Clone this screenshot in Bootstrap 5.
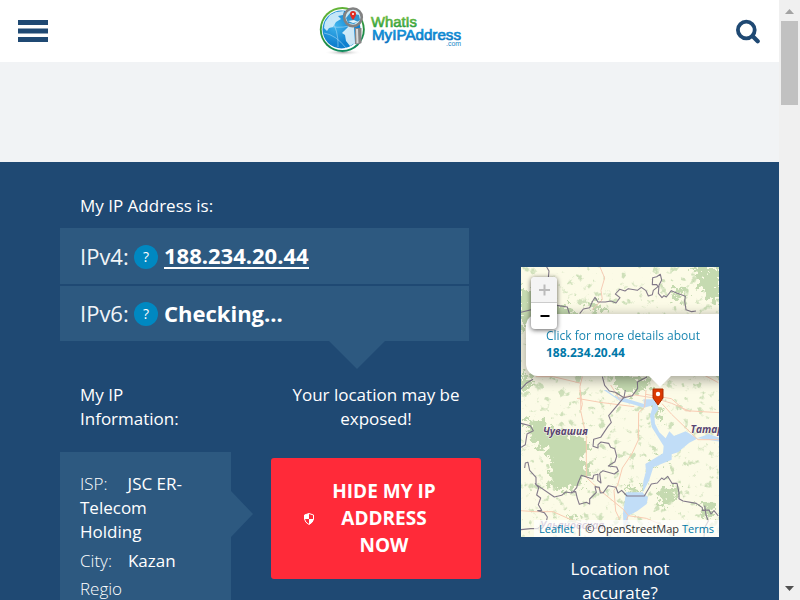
<!DOCTYPE html>
<html lang="en">
<head>
<meta charset="utf-8">
<meta name="viewport" content="width=device-width, initial-scale=1">
<title>What Is My IP Address</title>
<link href="https://cdn.jsdelivr.net/npm/bootstrap@5.3.0/dist/css/bootstrap.min.css" rel="stylesheet">
<style>
html,body{height:100%;overflow:hidden}
body{font-family:"Open Sans",sans-serif;font-size:17px;line-height:24px;color:#fff;background:#1f4973}
.page{width:779px;height:600px}
.topbar{height:62px;padding:0 18px;background:#fff}
.topbar>*{width:142px}
.brand-mark{height:62px;width:144px}
.adspace{height:100px;background:#f1f3f5}
.hero{height:438px;background:#1f4973;padding:32px 60px 0;gap:52px}
.main-col{width:409px}
.intro{padding-left:20px;margin-bottom:10px}
.ip-row{background:#2d5980;padding-left:20px;font-size:22px;line-height:30px;font-weight:300}
.ip-row.first{height:56px}
.ip-row.second{height:55px;margin-top:2px}
.ip-row strong{font-weight:700}
.ip-label{width:49px;font-size:22px;font-weight:400;white-space:nowrap;color:#f1f5f8}
.ip-row>.ip-label,.ip-row>.ip-value{margin-top:-1px}
.q{width:24px;height:24px;border-radius:50%;background:#0088c1;font-size:14px;font-weight:500;margin:1px 6px 0 5px}
.ip-link{color:#fff;text-decoration:none;border-bottom:2px solid #fff;line-height:24px}
.arrow-down{left:269px;top:100%;width:56px;height:28px;background:#2d5980;clip-path:polygon(0 0,100% 0,50% 100%)}
.arrow-right{left:100%;top:39px;width:22px;height:46px;background:#2d5980;clip-path:polygon(0 0,100% 50%,0 100%)}
.details{gap:40px;margin-top:42px}
.info-col{width:171px}
.alert-col{width:210px}
.info-box{background:#2d5980;margin-top:21px;padding:20px 20px 0;height:160px;font-weight:300}
.info-box b{font-weight:400}
.isp-row{margin-bottom:5px}
.isp-row span{margin-right:20px}
.city-row{margin-bottom:4px}
.city-row span{margin-right:16px}
.hide-btn{background:#ff2a39;color:#fff;height:121px;margin-top:27px;border-radius:3px;font-size:19px;line-height:27px;font-weight:700;border:0;padding:0 0 0 33px}
.hide-btn span{margin-left:16px;width:108px}
.map-col{width:198px;padding-top:73px}
.map{width:198px;height:270px;background:#fcfbe7}
.map-note{margin-top:20px}
.pop{left:5px;top:47px;width:230px;height:62px;background:#fff;border-radius:12px;padding:13px 20px;font-size:12px;line-height:17px;color:#0078a8;box-shadow:0 3px 14px rgba(0,0,0,.4)}
.pop-text{font-weight:400;opacity:.9}
.pop-tip{left:128px;top:109px;width:22px;height:11px;background:#fff;clip-path:polygon(0 0,100% 0,50% 100%)}
.pin{left:131px;top:121px}
.zoomer{left:10px;top:10px;width:26px;height:52px;background:#fff;border-radius:4px;box-shadow:0 1px 5px rgba(0,0,0,.65);overflow:hidden}
.zoomer svg{display:block}
.credit{right:0;bottom:0;height:17px;width:185px;background:rgba(255,255,255,.7);color:#333;font-size:11px;line-height:17px;padding:0 5px;white-space:nowrap}
.credit span{color:#0078a8}
.scroll{width:21px;height:600px;background:#f0f0f0}
</style>
<script src="https://cdn.jsdelivr.net/npm/bootstrap@5.3.0/dist/js/bootstrap.bundle.min.js"></script>
</head>
<body>
<div class="d-flex">
<div class="page flex-shrink-0 overflow-hidden">
<header class="topbar d-flex align-items-center justify-content-between">
  <div><svg class="d-block" width="30" height="22"><path d="M0 0h30v5H0zM0 8.500h30v5H0zM0 17h30v5H0z" fill="#1f4973"/></svg></div>
  <svg class="brand-mark" viewBox="318 0 144 62" role="img" aria-label="WhatIsMyIPAddress.com">
    <defs>
      <linearGradient id="ring" x1="0" y1="0" x2="0.3" y2="1"><stop stop-color="#72bd35"/><stop offset=".75" stop-color="#218d42"/><stop offset="1" stop-color="#138c5e"/></linearGradient>
      <radialGradient id="sea" cx=".35" cy=".4"><stop stop-color="#3fb4ec"/><stop offset="1" stop-color="#0f80cf"/></radialGradient>
      <linearGradient id="gt" x1="0" y1="0" x2="0" y2="1"><stop stop-color="#7ac143"/><stop offset="1" stop-color="#1d983c"/></linearGradient>
      <linearGradient id="bt" x1="0" y1="0" x2="0" y2="1"><stop stop-color="#109de0"/><stop offset="1" stop-color="#0a72c0"/></linearGradient>
      <radialGradient id="shade"><stop stop-color="#aaa"/><stop offset="1" stop-color="#fff" stop-opacity="0"/></radialGradient>
    </defs>
    <ellipse cx="343" cy="52.500" rx="19" ry="3" fill="url(#shade)"/>
    <circle cx="342.300" cy="29.500" r="22.500" fill="url(#ring)"/>
    <circle cx="342.300" cy="29.500" r="20.600" fill="#fff"/>
    <circle cx="341.500" cy="29.500" r="19" fill="url(#sea)"/>
    <path d="M325 22l5-7 6-3 8-1-1 4-5 1 3 3-5 3-3 5-4 1-2 3-3-3z" fill="#e2f5fd" opacity=".85"/>
    <path d="M344 31l5-5 5 0 1 17-5 3-4-5-1-6-3-2z" fill="#edf9fe" opacity=".85"/>
    <path d="M324 33q12 2 22 15M330 17q9 14 8 30M324 25q14 4 25 1" fill="none" stroke="#bfe5fa" stroke-width=".5"/>
    <path d="M355 28l6.500 0 0 15q-3 2-6.500 1z" fill="#858585"/><path d="M356 29h2l.5 14-2 .5z" fill="#dadada"/>
    <circle cx="353" cy="17.300" r="8.800" fill="#c9e9f6" stroke="#828282" stroke-width="2.600"/>
    <path d="M346 18l4-5 9 2 1 5-6 4-6-1z" fill="#3294ce"/><path d="M348 21l6-1 4 2-5 1z" fill="#e6f6fc"/>
    <path d="M353 20q-3-4-3-6a3 3 0 0 1 6 0q0 2-3 6z" fill="#e32b20"/><circle cx="353" cy="14" r="1" fill="#fff"/>
    <g font-family="Liberation Sans,sans-serif"><text x="371" y="27" font-size="14" textLength="46" lengthAdjust="spacingAndGlyphs" fill="url(#gt)" stroke="url(#gt)" stroke-width=".6">WhatIs</text>
    <text x="372" y="40" font-size="15" textLength="89" lengthAdjust="spacingAndGlyphs" fill="url(#bt)" stroke="url(#bt)" stroke-width=".7">MyIPAddress</text>
    <text x="446" y="46" font-size="7" textLength="15" lengthAdjust="spacingAndGlyphs" fill="#1686c8">.com</text></g>
  </svg>
  <div class="d-flex justify-content-end"><svg width="26" height="26" fill="none" stroke="#1f4973"><circle cx="11.300" cy="12" r="8.400" stroke-width="3.800"/><path d="M17.500 18L22.700 23.300" stroke-width="4.200" stroke-linecap="round"/></svg></div>
</header>
<div class="adspace"></div>
<main class="hero d-flex">
  <section class="main-col flex-shrink-0">
    <div class="intro">My IP Address is:</div>
    <div class="position-relative">
      <div class="ip-row first d-flex align-items-center"><span class="ip-label">IPv4:</span><span class="q d-flex align-items-center justify-content-center">?</span><strong class="ip-link">188.234.20.44</strong></div>
      <div class="ip-row second d-flex align-items-center"><span class="ip-label">IPv6:</span><span class="q d-flex align-items-center justify-content-center">?</span><strong class="ip-value">Checking...</strong></div>
      <div class="arrow-down position-absolute"></div>
    </div>
    <div class="details d-flex">
      <div class="info-col flex-shrink-0">
        <div class="intro mb-0">My IP<br>Information:</div>
        <div class="info-box position-relative">
          <div class="isp-row"><span>ISP:</span><b>JSC ER-</b><br><b>Telecom</b><br><b>Holding</b></div>
          <div class="city-row"><span>City:</span><b>Kazan</b></div>
          <div>Regio</div>
          <div class="arrow-right position-absolute"></div>
        </div>
      </div>
      <div class="alert-col flex-shrink-0 text-center">
        <div>Your location may be<br>exposed!</div>
        <button class="hide-btn w-100 d-flex align-items-center"><svg width="10" height="12" viewBox="0 0 10 12" class="d-block flex-shrink-0"><path d="M5 .5L9.500 2V6Q9 9.500 5 11.500Q1 9.500.5 6V2z" fill="none" stroke="#fff"/><path d="M5 .5V6H.5V2zM5 6h4.500Q9 9.500 5 11.500z" fill="#fff"/></svg><span>HIDE MY IP<br>ADDRESS<br>NOW</span></button>
      </div>
    </div>
  </section>
  <aside class="map-col flex-shrink-0 text-center">
    <div class="map position-relative overflow-hidden text-start">
      <svg class="d-block" width="198" height="270" viewBox="0 0 198 270">
        <defs>
          <filter id="specks" x="0" y="0" width="100%" height="100%" color-interpolation-filters="sRGB"><feTurbulence type="fractalNoise" baseFrequency=".13" numOctaves="4" seed="8"/><feColorMatrix values="0 0 0 0 .81  0 0 0 0 .88  0 0 0 0 .73  7 0 0 0 -4.200"/></filter>
          <filter id="rough" x="-10%" y="-10%" width="120%" height="120%"><feTurbulence type="fractalNoise" baseFrequency=".2" numOctaves="4" seed="3" result="n"/><feDisplacementMap in="SourceGraphic" in2="n" scale="24" xChannelSelector="R" yChannelSelector="G"/></filter>
        </defs>
        <rect width="198" height="270" filter="url(#specks)"/>
        <g fill="#c5dab0" filter="url(#rough)">
          <path d="M0 22l12 2 14 10 22 6 12 12 0 10-34 3-26-6zM172 0h26v38l-13-8-7-13zM152 20l11 1 2 9-11 4zM92 106l20 5 18 0-2 9-18 7-16-8zM68 36l12-2 3 10-10 4zM0 105l14 5-1 9-13 4z"/>
          <path d="M6 150l16 3 7 10 17 3 21 6 1 12-9 5 9 13-3 11-20 11-13-2-4-10 4-11-7-17-13-10-6-13zM137 223l17-3 2 11-14 8zM130 135l8 2 5 20-7-2zM177 237l16 2 0 12-12-3zM128 196l8-2 14-5-2 4-19 7zM48 248l10 1 3 6-8 1zM103 220l20 2-2 3-16 0z"/>
        </g>
        <g transform="translate(-11 123) scale(.333333)">
          <path d="M290 0L313 18 345 25 402 42 400 28 435 28 446 57 433 76 435 101 448 127 467 145 478 124 492 138 527 124 561 145 596 132 628 143V155L564 145 538 158 504 187 485 193 485 209 461 219 430 232 417 272 398 308 414 322 410 342 382 363 354 378 355 410 341 420 339 370 348 307 398 307 400 274 408 244 406 222 459 190 461 168 425 111 420 77 429 46 402 53 368 43 331 34 281 0z" fill="#c1ddf7"/>
          <g fill="none" stroke="#f8cbb2" stroke-width="3"><path d="M210 0L217 43 212 62 229 142V264M231 264L270 301 341 359 355 377 409 385 447 401 494 430M408 0L404 51 386 68 385 150 366 191 337 234 323 285 312 301 317 363 330 390M201 25L270 37 373 50M407 13L484 26 526 62 628 68M456 41L485 73 564 149H628M32 362L75 365 129 365 183 389 243 416M355 377L337 420"/></g>
        </g>
        <g transform="translate(-11 -7) scale(.333333)"><path d="M270 21L284 54 273 91 277 119 246 149M302 375L328 417 345 410 375 405 432 414 485 430 542 455M217 350L210 379 213 450M77 350L130 350 213 370M580 344L625 368" fill="none" stroke="#f6ccb7" stroke-width="3"/></g>
        <g fill="none" stroke="#827989" stroke-width="3.300" stroke-linejoin="round">
          <path transform="translate(-11 -7) scale(.333333)" d="M110 21l7 12-2 20M33 157l30-8M141 136l31 5 6 20M209 161L220 147 239 143 247 125 255 112 264 126 286 126 303 123 318 129 330 113 316 102 329 88 345 93 355 86 382 91 394 82 408 92 415 108 427 104 430 91 444 80 440 74 427 74 428 53 440 50 451 43 455 60 447 76 445 100 456 113 462 107 469 111 484 92 498 98 526 109 524 123 528 149 545 155 558 153M32 388l18-19 19-11M277 350l7 26 14 17 18 4 26 16 25-6 16-22-1-19 29-15"/>
          <path transform="translate(-11 123) scale(.333333)" d="M346 0l-4 22-46 55 8 20-10 12-22 33-21 6-2 21 15 5 0-10 9-8 23 4 6 12 12 4 6 23-5 16-10 6-10 7 25 3 5 12-12 9-34-10-10 8 4 29-10-8 1-18-13 3-3 11-34-11-10 23-4 14-14 16-19-3-12 10-22 5-55-38 0-21-19-21-5-24-8 2-2 15M33 100l28 7 9 15-19 10-5 32-13 8M75 280l11 13-6 22 12 9-7 20 10 17-12 1 20 6 9 13-3 14-26 21-21 0-31 3M183 306l14-1 5 20 6 18 21-6 10 5 0-15 20-20-4-17 13 2 3 17 9-1 15-21 23 5 6 17 11-8 16 17h52l21-36 18-3 13-15 7 5 11-10 13 21 15 0 6 28 0 18 12 7 40 7 18 13 0 8 20-1 6 12 9-10 13 16M584 347l4 28 7 18-11 20-2 27"/>
        </g>
        <g font-family="Open Sans,sans-serif" font-size="10.200" font-weight="700" font-style="italic" fill="#594671" stroke="#fffdf0" stroke-width="1" paint-order="stroke"><text x="22" y="168" textLength="45" lengthAdjust="spacingAndGlyphs">Чувашия</text><text x="169.500" y="166.300">Татарстан</text><text x="19" y="261.500" font-size="10" font-weight="600" textLength="64" lengthAdjust="spacingAndGlyphs" fill="#806092">Ульяновская</text></g>
      </svg>
      <div class="pop position-absolute text-nowrap"><span class="pop-text">Click for more details about</span><br><b>188.234.20.44</b></div>
      <div class="pop-tip position-absolute"></div>
      <svg class="pin position-absolute" width="12" height="18"><path d="M1 1h10v9L6 17 1 10z" fill="#dc3900" stroke="#a92b00"/><circle cx="6" cy="6" r="2.200" fill="#fff"/></svg>
      <div class="zoomer position-absolute"><svg width="26" height="52"><path d="M0 0h26v26H0z" fill="#f4f4f4"/><path d="M0 25.500h26" stroke="#ccc"/><path d="M8 13h11M13.500 7.500v11" stroke="#bbb" stroke-width="2"/><path d="M9.500 39h9" stroke="#000" stroke-width="2"/></svg></div>
      <div class="credit position-absolute"><span>Leaflet</span> | © OpenStreetMap <span>Terms</span></div>
    </div>
    <div class="map-note">Location not<br>accurate?</div>
  </aside>
</main>
</div>
<svg class="scroll flex-shrink-0" width="21" height="600"><path d="M2 21h17v84H2z" fill="#c1c1c1"/><path d="M6 14l4.500-5 4.500 5z" fill="#a3a3a3"/><path d="M6 586h9l-4.500 5z" fill="#505050"/></svg>
</div>
</body>
</html>
